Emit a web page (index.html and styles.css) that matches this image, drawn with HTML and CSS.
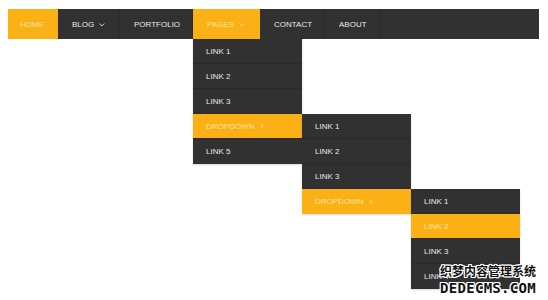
FILE: index.html
```html
<!DOCTYPE html>
<html lang="en">
<head>
  <meta charset="UTF-8">
  <title>Dropdown Menu</title>
  <link rel="stylesheet" href="styles.css">
</head>
<body>
  <!-- Barra de navegação principal -->
  <nav class="navbar">
    <ul class="menu">
      <li class="active"><a href="#">Home</a></li>
      <li><a href="#">Blog <svg class="caret" width="6" height="4" viewBox="0 0 6 4"><polyline points="0.5,0.5 3,3 5.5,0.5" fill="none" stroke="currentColor" stroke-width="0.9"/></svg></a></li>
      <li><a href="#">Portfolio</a></li>
      <li class="active open">
        <a href="#">Pages <svg class="caret" width="6" height="4" viewBox="0 0 6 4"><polyline points="0.5,0.5 3,3 5.5,0.5" fill="none" stroke="currentColor" stroke-width="0.9"/></svg></a>
        <ul class="dropdown">
          <li><a href="#">Link 1</a></li>
          <li><a href="#">Link 2</a></li>
          <li><a href="#">Link 3</a></li>
          <li class="active open">
            <a href="#">Dropdown <span class="arrow">&rsaquo;</span></a>
            <ul class="dropdown sub">
              <li><a href="#">Link 1</a></li>
              <li><a href="#">Link 2</a></li>
              <li><a href="#">Link 3</a></li>
              <li class="active open">
                <a href="#">Dropdown <span class="arrow">&rsaquo;</span></a>
                <ul class="dropdown sub">
                  <li><a href="#">Link 1</a></li>
                  <li class="active"><a href="#">Link 2</a></li>
                  <li><a href="#">Link 3</a></li>
                  <li><a href="#">Link 4</a></li>
                </ul>
              </li>
            </ul>
          </li>
          <li><a href="#">Link 5</a></li>
        </ul>
      </li>
      <li><a href="#">Contact</a></li>
      <li><a href="#">About</a></li>
    </ul>
  </nav>

  <!-- Marca d'água -->
  <div class="watermark">
    <span class="wm-cn">织梦内容管理系统</span>
    <span class="wm-en">DEDECMS.COM</span>
  </div>
</body>
</html>
```

FILE: styles.css
```css
/* Reset básico */
* { box-sizing: border-box; margin: 0; padding: 0; }

body {
  font-family: 'Liberation Sans', Arial, sans-serif;
  background: #fff;
  padding: 9px 9px 0 8px;
  height: 300px;
  overflow: hidden;
}

ul { list-style: none; }

a {
  color: #e8e8e8;
  text-decoration: none;
  text-transform: uppercase;
  font-size: 8px;
  white-space: nowrap;
}

/* Barra principal */
.navbar {
  background: #313131;
  height: 30px;
}

.menu {
  display: flex;
  height: 100%;
}

.menu > li {
  position: relative;
  border-right: 1px solid #2a2a2a;
}

.menu > li > a {
  display: flex;
  align-items: center;
  gap: 5px;
  height: 30px;
  padding: 0 14px;
}

.menu > li:nth-child(1) { width: 50px; }
.menu > li:nth-child(2) { width: 62px; }
.menu > li:nth-child(3) { width: 73px; }
.menu > li:nth-child(4) { width: 67px; }
.menu > li:nth-child(5) { width: 65px; }
.menu > li:nth-child(6) { width: 55px; }

.menu > li:first-child > a { padding-left: 12px; }

.caret { margin-top: 1px; }

/* Itens ativos em amarelo */
.menu li.active { background: #fbb116; border-right-color: #fbb116; }
.menu li.active > a { color: #fde3a2; }

/* Submenus */
.dropdown {
  position: absolute;
  top: 30px;
  left: 0;
  width: 109px;
  background: #313131;
  box-shadow: 0 1px 2px rgba(0, 0, 0, 0.15);
}

.dropdown.sub {
  top: 0;
  left: 100%;
}

.dropdown li {
  position: relative;
  border-bottom: 1px solid #2a2a2a;
}

.dropdown li:last-child { border-bottom: none; }

.dropdown a {
  display: flex;
  align-items: center;
  gap: 6px;
  height: 24px;
  padding: 0 13px;
}

.dropdown li:last-child > a { height: 25px; }

.arrow {
  font-size: 10px;
  margin-top: -1px;
}

/* Marca d'água */
.watermark {
  position: absolute;
  left: 440px;
  top: 265px;
  display: flex;
  flex-direction: column;
  line-height: 1;
  color: #111;
  font-weight: bold;
  text-shadow:
    1px 0 0 #fff, -1px 0 0 #fff, 0 1px 0 #fff, 0 -1px 0 #fff,
    1px 1px 0 #fff, -1px -1px 0 #fff, 1px -1px 0 #fff, -1px 1px 0 #fff;
}

.wm-cn {
  font-family: 'Noto Sans CJK SC', sans-serif;
  font-size: 12px;
}

.wm-en {
  font-family: 'DejaVu Sans Mono', monospace;
  font-size: 14px;
  margin-top: 4px;
  letter-spacing: 0.3px;
}
```
